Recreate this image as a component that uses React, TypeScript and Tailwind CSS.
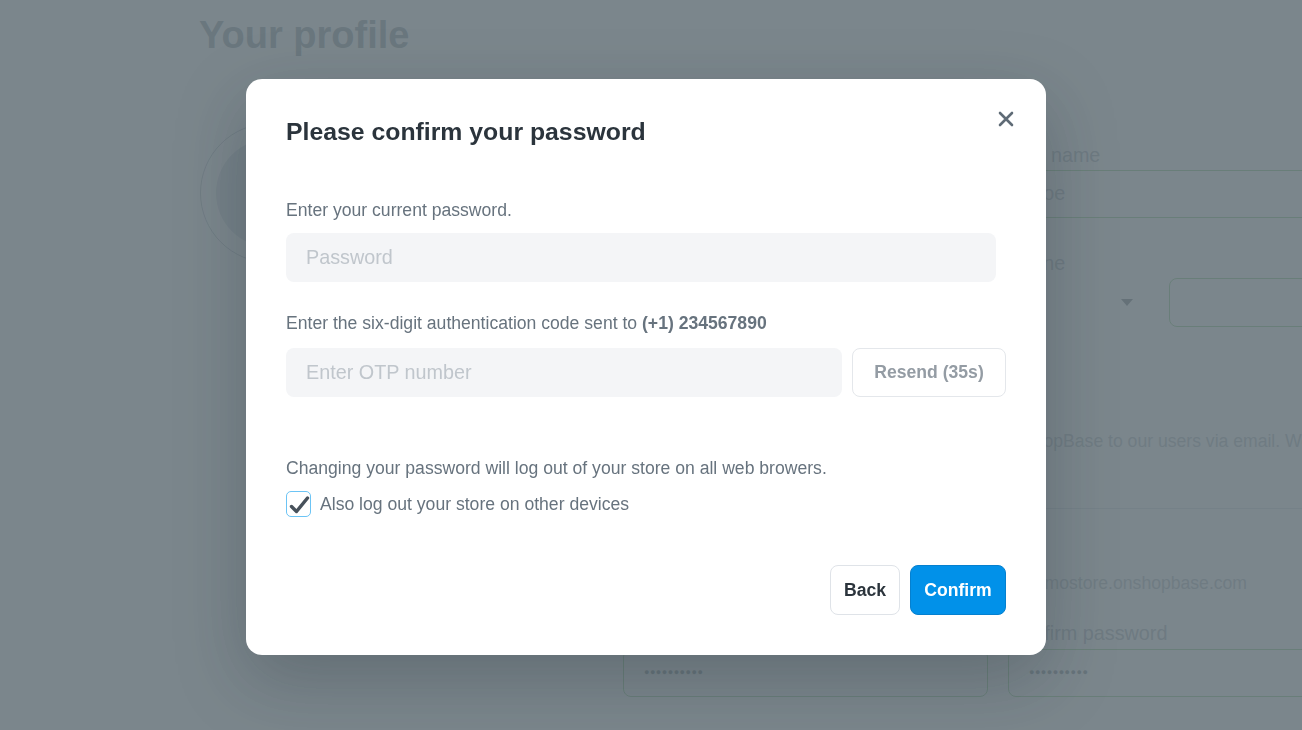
import React from "react";

const font = { fontFamily: '"Liberation Sans", Arial, sans-serif' };

const Field: React.FC<{ label: string; value?: string; dots?: boolean; gap?: string }> = ({ label, value, dots, gap = "mb-[1px]" }) => (
  <div>
    <p className={`${gap} text-[19.8px] leading-[28px] text-[#bcc3c9]`}>{label}</p>
    <div className="flex h-[48px] items-center rounded-[8px] border border-[#a6d8a0] px-[20px] text-[19.8px] text-[#bcc3c9]">
      {dots ? <span className="text-[9px] tracking-[0.5px] text-[#9aa3aa]">●●●●●●●●●●</span> : value}
    </div>
  </div>
);

const ProfilePage: React.FC = () => (
  <div className="h-[730px] overflow-hidden bg-white pl-[199px]" style={font}>
    <h1 className="pt-[12px] text-[38px] font-bold leading-[46px] text-[#aab2b8]">Your profile</h1>
    <div className="flex">
      <div className="w-[424px] shrink-0 pl-[1px] pt-[65px]">
        <div className="flex h-[140px] w-[140px] items-center justify-center rounded-full border border-[#c7cdd3]">
          <div className="h-[108px] w-[108px] rounded-full bg-[#dfe3e8]" />
        </div>
      </div>
      <div className="grid w-[720px] shrink-0 grid-cols-[365px_365px] gap-x-[20px] pt-[83px]">
        <Field label="First name" value="John" />
        <Field label="Last name" value="Doe" />
        <div className="mt-[31px]">
          <Field label="Email" value="john.doe@gmail.com" />
        </div>
        <div className="mt-[31px]">
          <p className="mb-[1px] text-[19.8px] leading-[28px] text-[#bcc3c9]">Phone</p>
          <div className="flex gap-[21px]">
            <div className="flex h-[49px] w-[140px] items-center justify-end pr-[15px]">
              <span className="h-0 w-0 border-x-[6px] border-t-[7px] border-x-transparent border-t-[#8f979d]" />
            </div>
            <div className="h-[49px] flex-1 rounded-[8px] border border-[#a6d8a0]" />
          </div>
        </div>
        <p className="col-span-2 mt-[102px] w-[680px] overflow-hidden whitespace-nowrap text-[17.6px] leading-[24px] text-[#c3c9ce]">
          All important account notifications will be sent from ShopBase to our users via email. We never share it.
        </p>
        <div className="col-span-2 mt-[55px] border-t border-[#dfe3e8]" />
        <p className="col-start-2 mt-[62px] pl-[17px] text-[17.6px] leading-[24px] text-[#c3c9ce]">demostore.onshopbase.com</p>
        <div className="mt-[24px]">
          <Field label="New password" dots gap="mb-[2px]" />
        </div>
        <div className="mt-[24px]">
          <Field label="Confirm password" dots gap="mb-[2px]" />
        </div>
      </div>
    </div>
  </div>
);

const ConfirmPasswordModal: React.FC = () => {
  const [logoutAll, setLogoutAll] = React.useState(true);

  return (
    <div className="fixed inset-0 flex items-start justify-center bg-[rgba(90,104,111,0.8)] pr-[10px] pt-[79px]" style={font}>
      <div className="relative w-[800px] rounded-[16px] bg-white px-[40px] pb-[40px] pt-[37px] shadow-[0_24px_70px_rgba(20,30,40,0.25)]">
        <button className="absolute right-[32px] top-[32px] text-[#5f6b76]">
          <svg width="16" height="16" viewBox="0 0 16 16" fill="none">
            <path d="M2 2L14 14M14 2L2 14" stroke="currentColor" strokeWidth="2.6" strokeLinecap="round" />
          </svg>
        </button>

        <h2 className="text-[24.8px] font-bold leading-[32px] text-[#2b343c]">Please confirm your password</h2>

        <p className="mt-[50px] text-[17.6px] leading-[24px] text-[#67737e]">Enter your current password.</p>
        <input
          type="password"
          placeholder="Password"
          className="mt-[11px] h-[49px] w-[710px] rounded-[8px] bg-[#f4f5f7] px-[20px] text-[19.8px] text-[#212b36] outline-none placeholder:text-[#c0c6cc]"
        />

        <p className="mt-[29px] text-[17.6px] leading-[24px] text-[#67737e]">
          Enter the six-digit authentication code sent to <span className="font-bold">(+1) 234567890</span>
        </p>
        <div className="mt-[13px] flex gap-[10px]">
          <input
            placeholder="Enter OTP number"
            className="h-[49px] flex-1 rounded-[8px] bg-[#f4f5f7] px-[20px] text-[19.8px] text-[#212b36] outline-none placeholder:text-[#c0c6cc]"
          />
          <button className="h-[49px] w-[154px] rounded-[8px] border border-[#e4e7eb] bg-white text-[17.6px] font-bold text-[#949ca4]">
            Resend (35s)
          </button>
        </div>

        <p className="mt-[59px] text-[17.6px] leading-[24px] text-[#67737e]">
          Changing your password will log out of your store on all web browers.
        </p>
        <label className="mt-[11px] flex cursor-pointer items-center gap-[9px]">
          <span
            className="flex h-[26px] w-[25px] items-center justify-center rounded-[5px] border border-[#6cc4f5] bg-white"
            onClick={() => setLogoutAll(!logoutAll)}
          >
            {logoutAll && (
              <svg width="22" height="22" viewBox="0 0 22 22" fill="none">
                <path d="M3.5 13.5L8.5 18.5L19.5 5" stroke="#47515b" strokeWidth="3.4" strokeLinecap="round" strokeLinejoin="round" />
              </svg>
            )}
          </span>
          <span className="text-[17.6px] leading-[24px] text-[#67737e]">Also log out your store on other devices</span>
        </label>

        <div className="mt-[48px] flex justify-end gap-[10px]">
          <button className="h-[50px] w-[70px] rounded-[8px] border border-[#dfe3e8] bg-white text-[17.6px] font-bold text-[#2b343c]">
            Back
          </button>
          <button className="h-[50px] w-[96px] rounded-[8px] border border-[#0580cf] bg-[#0191e9] text-[17.6px] font-bold text-white">
            Confirm
          </button>
        </div>
      </div>
    </div>
  );
};

export default function App() {
  return (
    <div className="relative h-[730px] overflow-hidden">
      <ProfilePage />
      <ConfirmPasswordModal />
    </div>
  );
}
